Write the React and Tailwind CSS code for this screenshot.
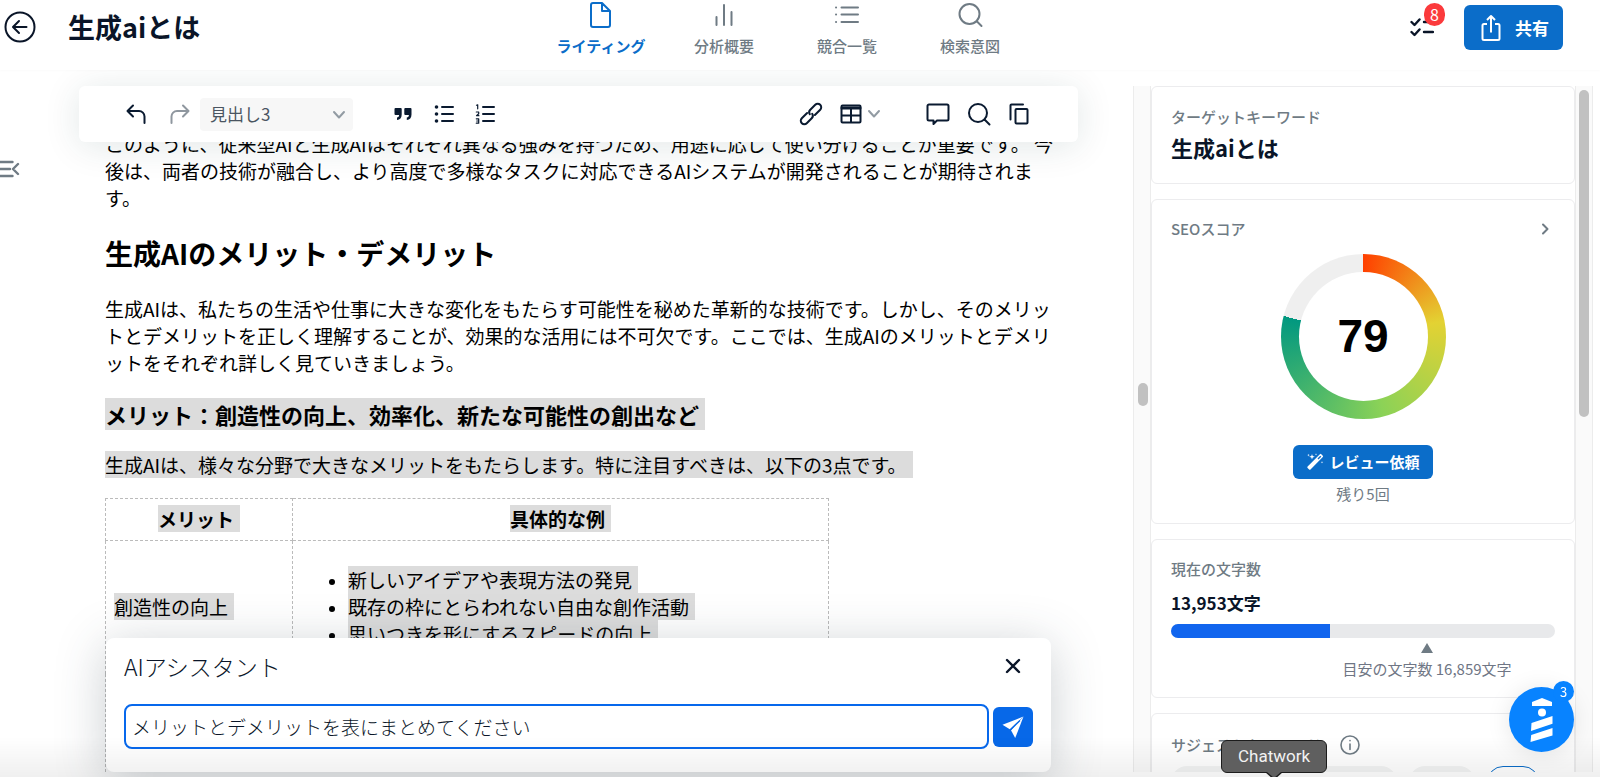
import React, { useState } from 'react';

const TABS = [
  { label: 'ライティング', icon: 'file', active: true },
  { label: '分析概要', icon: 'bars' },
  { label: '競合一覧', icon: 'list' },
  { label: '検索意図', icon: 'search' },
];

const stroke = {
  fill: 'none',
  stroke: 'currentColor',
  strokeWidth: 2,
  strokeLinecap: 'round',
  strokeLinejoin: 'round',
};

const TabIcon = ({ name }) => (
  <svg viewBox="0 0 28 28" className="size-7" {...stroke}>
    {name === 'file' && (
      <path d="M6 3h9l8 8v14a2 2 0 0 1-2 2H6a2 2 0 0 1-2-2V5a2 2 0 0 1 2-2zM15 3v8h8z" />
    )}
    {name === 'bars' && <path d="M6.500 17v8M14 5v20M21.500 12v13" />}
    {name === 'list' && (
      <path d="M8.500 7.500h16.500M8.500 14.500h16.500M8.500 22h16.500M3 7.500h.1M3 14.500h.1M3 22h.1" />
    )}
    {name === 'search' && (
      <>
        <circle cx="13.500" cy="14" r="10" />
        <path d="M21 21.500l4.500 4.500" />
      </>
    )}
  </svg>
);

const ToolButton = ({ label, className = '', children }) => (
  <button type="button" aria-label={label} className={`flex w-10 justify-center ${className}`}>
    {children}
  </button>
);

const Chevron = () => (
  <svg viewBox="0 0 14 10" className="h-2.5 w-3.5 text-[#929ba3]" {...stroke}>
    <path d="M2 2l5 5.500L12 2" />
  </svg>
);

const Header = () => (
  <header className="relative z-20 flex h-[70px] shrink-0 items-start justify-between bg-white shadow-[0_1px_2px_rgba(0,0,0,0.02)]">
    <div className="flex flex-1 items-center gap-8 pt-[7px] pl-1">
      <button type="button" aria-label="戻る">
        <svg viewBox="0 0 32 32" className="size-8" {...stroke}>
          <circle cx="16" cy="16" r="14.500" />
          <path d="M22.500 16H10M15 10l-6 6 6 6" />
        </svg>
      </button>
      <h1 className="text-[27px] leading-10 font-bold">生成aiとは</h1>
    </div>
    <nav className="flex">
      {TABS.map((tab) => (
        <a
          key={tab.label}
          href="#"
          className={`flex w-[123px] flex-col items-center text-[15px] leading-6 ${
            tab.active ? 'font-bold text-[#0b6dc9]' : 'font-medium text-[#6f7b84]'
          }`}
        >
          <TabIcon name={tab.icon} />
          <span className="pt-1.5">{tab.label}</span>
        </a>
      ))}
    </nav>
    <div className="mr-[37px] -ml-1 flex flex-1 items-center justify-end gap-[30px] pt-[5px]">
      <button type="button" aria-label="タスク" className="relative">
        <svg viewBox="0 0 24 20" className="h-5 w-6" {...stroke} strokeWidth="2.400">
          <path d="M1.500 4l3 3L9.500 1.500M1.500 14l3 3 5-5.500M14 4h9M14 14h9" />
        </svg>
        <span className="absolute -top-[15px] -right-[11px] flex h-[23px] w-[21px] items-center justify-center rounded-full bg-[#fb3a3c] text-base text-white">
          8
        </span>
      </button>
      <button
        type="button"
        className="flex h-[45px] items-center gap-3.5 rounded-md bg-[#0b6dc9] pr-3.5 pl-[17px] text-[17px] font-bold text-white"
      >
        <svg viewBox="0 0 20 28" className="h-7 w-5" {...stroke} strokeLinecap="butt">
          <path d="M6 10H3a1.500 1.500 0 0 0-1.500 1.500v13A1.500 1.500 0 0 0 3 26h14a1.500 1.500 0 0 0 1.500-1.500v-13A1.500 1.500 0 0 0 17 10h-3M10 18.500V3M6 6l4-4 4 4" />
        </svg>
        共有
      </button>
    </div>
  </header>
);

const Toolbar = () => (
  <div className="relative z-10 flex h-14 shrink-0 items-center rounded-md bg-white pr-[39px] pl-[37px] text-[#0a1a30] shadow-[0_4px_36px_rgba(20,60,60,0.12)]">
    <ToolButton label="元に戻す">
      <svg viewBox="0 0 20 20" className="size-5" {...stroke}>
        <path d="M7 1.500L1.500 7 7 12.500M2 7h11a5.500 5.500 0 0 1 5.500 5.500V19" />
      </svg>
    </ToolButton>
    <ToolButton label="やり直す" className="ml-1 text-[#8f979f]">
      <svg viewBox="0 0 20 20" className="size-5" {...stroke}>
        <path d="M13 1.500L18.500 7 13 12.500M18 7H7a5.500 5.500 0 0 0-5.500 5.500V19" />
      </svg>
    </ToolButton>
    <div className="relative">
      <select
        aria-label="段落スタイル"
        className="h-[33px] w-[153px] appearance-none rounded-sm bg-[#f7f7f7] px-2.5 text-[17px] text-[#4a5561]"
      >
        <option>見出し3</option>
      </select>
      <span className="pointer-events-none absolute top-3 right-[7px]">
        <Chevron />
      </span>
    </div>
    <ToolButton label="引用" className="ml-[30px]">
      <svg viewBox="0 0 18 14" className="h-3.5 w-[18px]" fill="currentColor">
        <path d="M1.500 1h5.200a1 1 0 0 1 1 1v5.500c0 3.300-1.700 5.300-4.700 5.500v-2.600c1.400-.2 2.100-1 2.100-2.400H1.500a1 1 0 0 1-1-1V2a1 1 0 0 1 1-1zM11.300 1h5.200a1 1 0 0 1 1 1v5.500c0 3.300-1.700 5.300-4.700 5.500v-2.600c1.400-.2 2.100-1 2.100-2.400h-3.600a1 1 0 0 1-1-1V2a1 1 0 0 1 1-1z" />
      </svg>
    </ToolButton>
    <ToolButton label="箇条書き" className="ml-px">
      <svg viewBox="0 0 20 20" className="size-5" {...stroke}>
        <path d="M8 3h11M8 10h11M8 17h11" />
        <g fill="currentColor" stroke="none">
          <circle cx="2.500" cy="3" r="1.800" />
          <circle cx="2.500" cy="10" r="1.800" />
          <circle cx="2.500" cy="17" r="1.800" />
        </g>
      </svg>
    </ToolButton>
    <ToolButton label="番号付きリスト" className="ml-px">
      <svg viewBox="0 0 20 20" className="size-5" {...stroke}>
        <path d="M8 3h11M8 10h11M8 17h11" />
        <path
          strokeWidth="1.200"
          d="M1.500 1.200L2.700.8v4M1.300 8h2.400v1.700l-2.200 2h2.400M1.300 14.800h2.400v4.400H1.300M1.700 17h2"
        />
      </svg>
    </ToolButton>
    <div className="flex-1" />
    <ToolButton label="リンク">
      <svg viewBox="0 0 24 24" className="size-6" {...stroke}>
        <g transform="rotate(-45 12 12)">
          <path d="M10 8.500H2.500a3.500 3.500 0 0 0 0 7H9.500a3.500 3.500 0 0 0 3.500-2.800M14 15.500h7.500a3.500 3.500 0 0 0 0-7H14.500a3.500 3.500 0 0 0-3.500 2.800" />
        </g>
      </svg>
    </ToolButton>
    <ToolButton label="表">
      <svg viewBox="0 0 22 20" className="h-5 w-[22px]" {...stroke}>
        <rect x="1.500" y="1.500" width="19" height="17" rx="1" />
        <path d="M2 4h18" strokeWidth="3" />
        <path d="M11 5v13M2 11.500h18" />
      </svg>
    </ToolButton>
    <button type="button" aria-label="表メニュー" className="mr-[37px] -ml-1">
      <Chevron />
    </button>
    <ToolButton label="コメント">
      <svg viewBox="0 0 24 24" className="size-6" {...stroke}>
        <path d="M3 2.500h18a1.500 1.500 0 0 1 1.500 1.500v13a1.500 1.500 0 0 1-1.500 1.500H11L7.500 22v-3.500H3A1.500 1.500 0 0 1 1.500 17V4A1.500 1.500 0 0 1 3 2.500z" />
      </svg>
    </ToolButton>
    <ToolButton label="検索" className="ml-px">
      <svg viewBox="0 0 24 24" className="size-6" {...stroke}>
        <circle cx="11" cy="11" r="9" />
        <path d="M17.500 17.500l5 5" />
      </svg>
    </ToolButton>
    <ToolButton label="コピー">
      <svg viewBox="0 0 20 22" className="h-[22px] w-5" {...stroke}>
        <path d="M1.500 16.500v-14a1 1 0 0 1 1-1H14" />
        <rect x="6.500" y="6" width="12" height="14.500" rx="1" />
      </svg>
    </ToolButton>
  </div>
);

const Selected = ({ children }) => (
  <mark className="bg-[#dcdcdc] pr-1.5 text-black">{children}</mark>
);

const Article = () => (
  <article className="-mt-3 pl-[26px] text-[19px] leading-[27px] whitespace-nowrap text-black">
    <p>
      このように、従来型AIと生成AIはそれぞれ異なる強みを持つため、用途に応じて使い分けることが重要です。 今
      <br />
      後は、両者の技術が融合し、より高度で多様なタスクに対応できるAIシステムが開発されることが期待されま
      <br />
      す。
    </p>
    <h2 className="mt-[22px] text-[28px] leading-10 font-bold">生成AIのメリット・デメリット</h2>
    <p className="mt-[22px]">
      生成AIは、私たちの生活や仕事に大きな変化をもたらす可能性を秘めた革新的な技術です。しかし、そのメリッ
      <br />
      トとデメリットを正しく理解することが、効果的な活用には不可欠です。ここでは、生成AIのメリットとデメリ
      <br />
      ットをそれぞれ詳しく見ていきましょう。
    </p>
    <h3 className="mt-[22px] text-[22px] leading-8 font-bold">
      <Selected>メリット：創造性の向上、効率化、新たな可能性の創出など</Selected>
    </h3>
    <p className="mt-[21px]">
      <Selected>生成AIは、様々な分野で大きなメリットをもたらします。特に注目すべきは、以下の3点です。</Selected>
    </p>
    <table className="mt-5 table-fixed border-collapse [&_td]:border [&_td]:border-dashed [&_td]:border-[#bbb] [&_td]:px-2 [&_td]:pt-[7px] [&_td]:pb-2 [&_th]:border [&_th]:border-dashed [&_th]:border-[#bbb] [&_th]:px-2 [&_th]:pt-1.5 [&_th]:pb-2">
      <thead>
        <tr>
          <th className="w-[187px]">
            <Selected>メリット</Selected>
          </th>
          <th className="w-[536px]">
            <Selected>具体的な例</Selected>
          </th>
        </tr>
      </thead>
      <tbody>
        <tr>
          <td>
            <Selected>創造性の向上</Selected>
          </td>
          <td>
            <ul className="my-[18px] list-disc pl-[47px] marker:text-base">
              <li><Selected>新しいアイデアや表現方法の発見</Selected></li>
              <li><Selected>既存の枠にとらわれない自由な創作活動</Selected></li>
              <li><Selected>思いつきを形にするスピードの向上</Selected></li>
            </ul>
          </td>
        </tr>
        <tr className="h-32">
          <td />
          <td />
        </tr>
      </tbody>
    </table>
  </article>
);

const Assistant = () => {
  const [prompt, setPrompt] = useState('メリットとデメリットを表にまとめてください');

  return (
    <form
      onSubmit={(event) => event.preventDefault()}
      className="absolute right-[27px] bottom-0 left-[27px] z-10 rounded-lg bg-white px-[18px] pt-2.5 pb-[23px] shadow-[0_8px_50px_rgba(50,64,76,0.26)]"
    >
      <div className="flex items-center justify-between pr-3">
        <label htmlFor="prompt" className="text-[23px] leading-9 font-light">
          AIアシスタント
        </label>
        <button type="button" aria-label="閉じる">
          <svg viewBox="0 0 16 16" className="size-4" {...stroke} strokeWidth="2.400">
            <path d="M2 2l12 12M14 2L2 14" />
          </svg>
        </button>
      </div>
      <div className="mt-5 flex items-center gap-1">
        <input
          id="prompt"
          type="text"
          autoFocus
          value={prompt}
          onChange={(event) => setPrompt(event.target.value)}
          className="h-[45px] flex-1 rounded-lg border-2 border-[#0768ec] px-1.5 text-[19px] font-light outline-none"
        />
        <button
          type="submit"
          aria-label="送信"
          className="flex size-10 items-center justify-center rounded-md bg-[#0768e8]"
        >
          <svg viewBox="0 0 22 22" className="size-[22px]" fill="#fff">
            <path d="M21.500.5L.5 8.800l7.300 4.400z" />
            <path d="M21.500.5l-8.300 21.500-4.200-7.800z" />
            <path d="M18 4.500L8.300 14" stroke="#0768e8" strokeWidth="1.300" />
          </svg>
        </button>
      </div>
    </form>
  );
};

// The score ring starts at twelve o'clock and runs clockwise.
const ScoreRing = ({ score }) => (
  <div className="mx-auto flex size-[165px] items-center justify-center rounded-full bg-[conic-gradient(#ff4000_0%,#e3d233_22%,#8bd257_46%,#019880_79%,#efefef_79%)]">
    <div className="flex size-[129px] items-center justify-center rounded-full bg-white font-['Liberation_Sans',sans-serif] text-[46px] font-bold text-black">
      {score}
    </div>
  </div>
);

const Card = ({ className = '', children }) => (
  <section className={`rounded-md border border-[#ececee] bg-white px-[19px] ${className}`}>
    {children}
  </section>
);

const Label = ({ children }) => (
  <h2 className="text-[15px] leading-6 font-medium text-[#6f7b84]">{children}</h2>
);

const Sidebar = () => (
  <aside className="mt-4 mr-[7px] flex w-[460px] shrink-0 overflow-hidden">
    <div className="flex w-[18px] items-center border-x border-[#ececec] bg-[#fafafa] pb-[70px] pl-1">
      <span className="h-[23px] w-2.5 rounded-full bg-[#c1c1c1]" />
    </div>
    <div className="flex flex-1 flex-col gap-[15px] [&>section]:shrink-0">
      <Card className="h-[98px] pt-[18px]">
        <Label>ターゲットキーワード</Label>
        <p className="mt-0.5 text-[22px] leading-8 font-bold">生成aiとは</p>
      </Card>
      <Card className="h-[325px] pt-[17px]">
        <div className="flex items-center justify-between pr-1">
          <Label>SEOスコア</Label>
          <button type="button" aria-label="詳細" className="text-[#6f7b84]">
            <svg viewBox="0 0 12 14" className="h-3.5 w-3" {...stroke}>
              <path d="M4 2.500L8.500 7 4 11.500" />
            </svg>
          </button>
        </div>
        <div className="mt-[13px] flex flex-col items-center">
          <ScoreRing score={79} />
          <button
            type="button"
            className="mt-[26px] flex h-[34px] items-center gap-[5px] rounded-md bg-[#0b6dc9] px-[13px] text-[15px] font-bold text-white"
          >
            <svg viewBox="0 0 18 18" className="size-[18px]" fill="#fff">
              <path d="M15.300 1.200l1.500 1.500a1 1 0 0 1 0 1.400L4.500 16.500a1 1 0 0 1-1.400 0l-1.500-1.500a1 1 0 0 1 0-1.400L13.900 1.200a1 1 0 0 1 1.400 0z" />
              <path d="M11.500 5.500l2.800-2.800 1 1-2.800 2.800z" fill="#0b6dc9" />
              <path d="M6 1l.7 2.100 2.100.7-2.100.7L6 6.600l-.7-2.100-2.100-.7 2.100-.7zM2.500.8l.3 1 1 .3-1 .3-.3 1-.3-1-1-.3 1-.3zM16 8l.3 1 1 .3-1 .3-.3 1-.3-1-1-.3 1-.3zM10 .2l.3.8.8.3-.8.3-.3.800-.3-.8-.8-.3.8-.3z" />
            </svg>
            レビュー依頼
          </button>
          <p className="mt-[3px] text-[15px] leading-6 text-[#6f7b84]">残り5回</p>
        </div>
      </Card>
      <Card className="h-[159px] pt-[17px]">
        <Label>現在の文字数</Label>
        <p className="mt-2 text-[17px] leading-7 font-bold">13,953文字</p>
        <div className="mt-[7px] h-3.5 overflow-hidden rounded-full bg-[#e8e9eb]">
          <div className="h-full w-[159px] bg-[#1165ee]" />
        </div>
        <div className="ml-[170px] flex w-[172px] flex-col items-center text-[15px] leading-6 text-[#6f7685]">
          <svg viewBox="0 0 12 10" className="mt-[5px] mb-1 h-2.5 w-3" fill="#6f7b84">
            <path d="M6 0l6 10H0z" />
          </svg>
          <span className="whitespace-nowrap">目安の文字数 16,859文字</span>
        </div>
      </Card>
      <Card className="h-[159px] pt-[19px]">
        <div className="flex items-center gap-[19px]">
          <Label>サジェストキーワード</Label>
          <svg viewBox="0 0 20 20" className="size-5 text-[#6f7b84]" {...stroke} strokeWidth="1.600">
            <circle cx="10" cy="10" r="9" />
            <path d="M10 9v5.500M10 5.600v.2" />
          </svg>
        </div>
        <div className="mt-[9px] flex gap-3">
          <span className="h-8 w-[226px] rounded-full bg-[#f3f4f4]" />
          <span className="h-8 w-[66px] rounded-full bg-[#f3f4f4]" />
          <span className="h-8 w-[52px] rounded-full border border-[#0b6dc9]" />
        </div>
      </Card>
    </div>
    <div className="flex w-[18px] justify-center border-x border-[#ececec] bg-[#fafafa] pt-1">
      <span className="h-[327px] w-2.5 rounded-full bg-[#c1c1c1]" />
    </div>
  </aside>
);

const ChatLauncher = () => (
  <button
    type="button"
    aria-label="チャット"
    className="absolute right-[26px] bottom-[25px] z-30 flex size-[65px] items-center justify-center rounded-full bg-[#0883ff] shadow-[0_2px_24px_rgba(0,0,0,0.1)]"
  >
    <svg viewBox="0 0 24 44" className="h-11 w-6" fill="#fff">
      <path d="M2 4L12 0l10 4V8H2z" />
      <circle cx="12" cy="14.500" r="4" />
      <path d="M1.500 25L22.500 18v7.800L1 33zM1.200 37L22.500 30v7.500L.5 44z" />
    </svg>
    <span className="absolute -top-[6px] right-0 flex size-[21px] items-center justify-center rounded-full bg-[#0883ff] text-[13px] text-white">
      3
    </span>
  </button>
);

const DockTooltip = () => (
  <div className="absolute right-[273px] bottom-1 z-30 flex h-[33px] w-[106px] items-center justify-center rounded-md border border-[#1c1c1c] bg-[#5f5f5f] font-['Roboto',sans-serif] text-[17px] text-[#f2f2f2]">
    Chatwork
    <svg viewBox="0 0 18 8" className="absolute -bottom-2 h-2 w-[18px]" fill="#1c1c1c">
      <path d="M0 0h18l-9 8z" />
      <path d="M2 0h14l-7 6z" fill="#5f5f5f" />
    </svg>
  </div>
);

const App = () => (
  <div className="relative flex h-screen flex-col overflow-hidden bg-white font-['Noto_Sans_CJK_JP',sans-serif] text-[#0a1528]">
    <Header />
    <main className="mb-[5px] flex min-h-0 flex-1">
      <div className="w-[79px] shrink-0 pt-[89px]">
        <button type="button" aria-label="目次を開く" className="block text-[#6f7b84]">
          <svg viewBox="0 0 20 20" className="size-5" {...stroke} strokeWidth="2.400">
            <path d="M0 3h12.500M0 10h10M0 17h12.500M18 5l-5 5 5 5" />
          </svg>
        </button>
      </div>
      <div className="relative mr-[55px] flex min-w-0 flex-1 flex-col pt-4">
        <Toolbar />
        <div className="min-h-0 flex-1 overflow-hidden">
          <Article />
        </div>
        <Assistant />
      </div>
      <Sidebar />
    </main>
    <div className="pointer-events-none absolute inset-x-0 bottom-0 z-20 h-10 bg-linear-to-b from-transparent to-black/6" />
    <ChatLauncher />
    <DockTooltip />
  </div>
);

export default App;
